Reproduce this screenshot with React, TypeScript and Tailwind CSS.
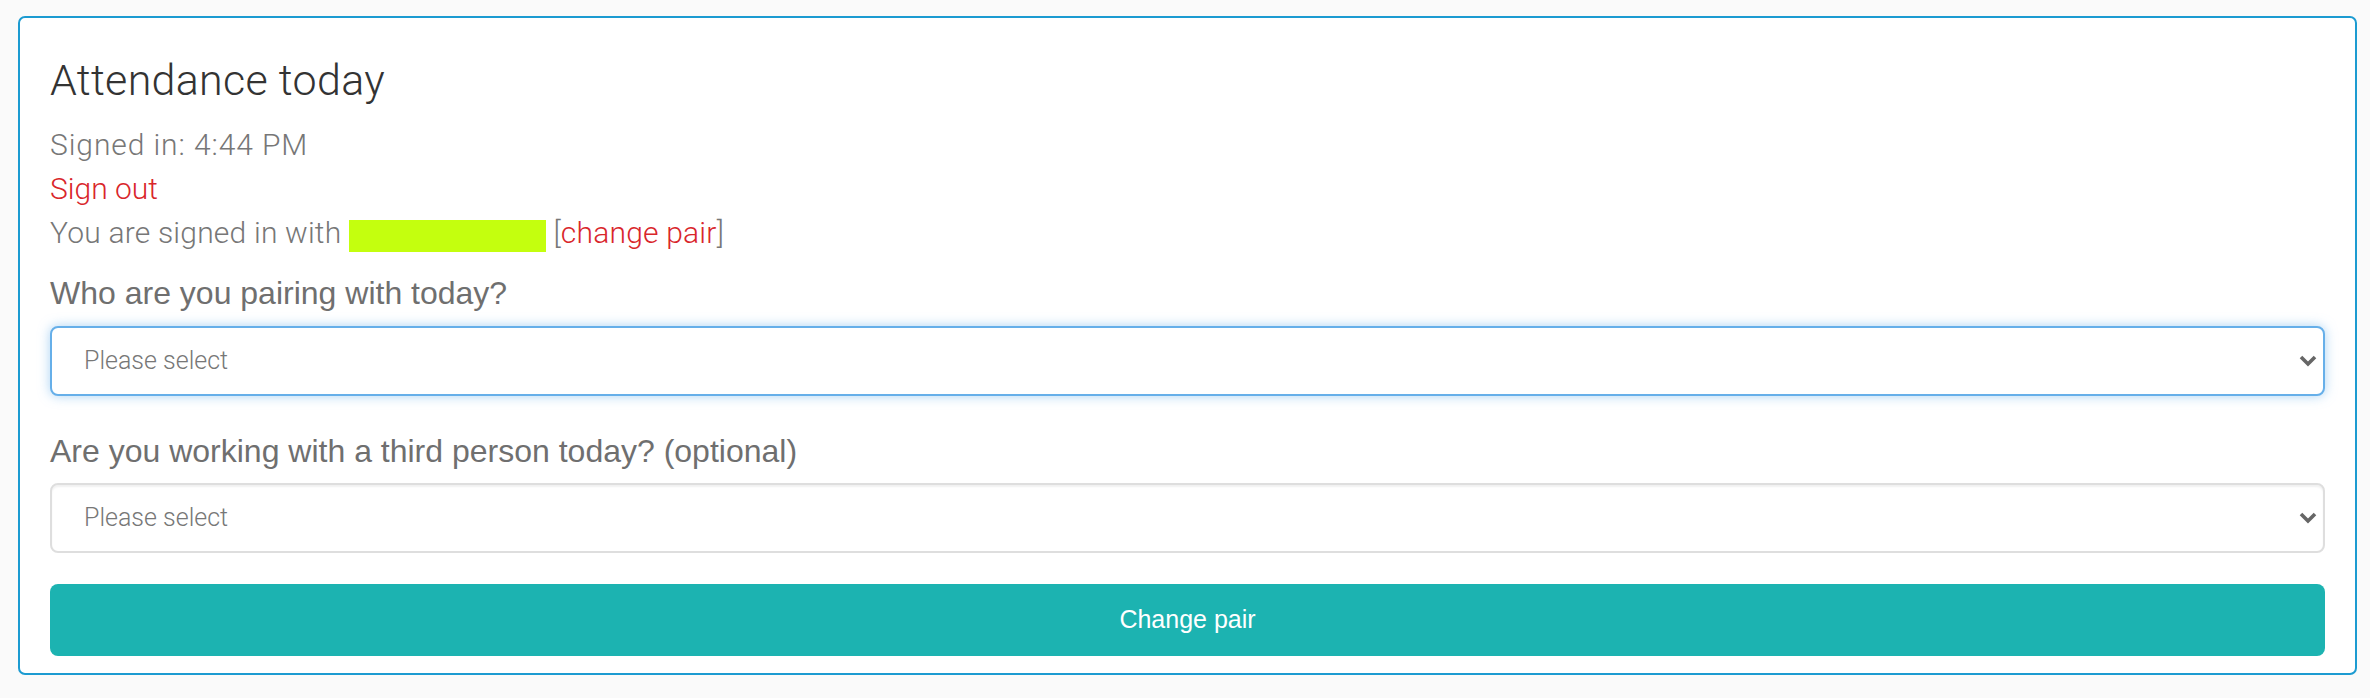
import React from 'react'

const LIGHT = "font-['Roboto','Liberation_Sans',sans-serif] font-light"
const REGULAR = "font-['Liberation_Sans','Roboto',sans-serif] font-normal"

function Chevron() {
  return (
    <svg width="18" height="12" viewBox="0 0 18 12" className="pointer-events-none absolute right-[8px] top-1/2 -translate-y-1/2">
      <polyline points="2,2 9,9 16,2" fill="none" stroke="#666" strokeWidth="3.6" strokeLinecap="butt" strokeLinejoin="miter" />
    </svg>
  )
}

function PairSelect({ focused }: { focused?: boolean }) {
  return (
    <div className="relative">
      <select
        defaultValue=""
        className={
          'block h-[70px] w-full appearance-none rounded-[8px] border-2 bg-white pl-[32px] pr-[40px] text-[25px] text-[#777] outline-none ' +
          LIGHT +
          (focused
            ? ' border-[#66afe9] shadow-[0_0_12px_rgba(102,175,233,0.55)]'
            : ' border-[#dedede] shadow-[inset_0_2px_2px_rgba(0,0,0,0.06)]')
        }
      >
        <option value="">Please select</option>
      </select>
      <Chevron />
    </div>
  )
}

export default function App() {
  return (
    <div className="min-h-[698px] bg-[#fafafa] pt-[16px]">
      <div className="ml-[18px] w-[2339px] rounded-[7px] border-2 border-[#1c9bd1] bg-white px-[30px] pt-[37px] pb-[17px]">
        {/* Header */}
        <h3 className={'mb-[18px] text-[43px] leading-[50px] tracking-[0.3px] text-[#333] ' + LIGHT}>Attendance today</h3>

        <div className={'text-[30px] leading-[44px] text-[#777] ' + LIGHT}>
          <p className="tracking-[0.9px]">Signed in: 4:44 PM</p>
          <p>
            <a href="#" className="text-[#d9262b]">Sign out</a>
          </p>
          <p className="tracking-[0.2px]">
            You are signed in with{' '}
            <span className="inline-block h-[32px] w-[197px] bg-[#c4ff0e] align-[-9px]" />{' '}
            [<a href="#" className="text-[#d9262b]">change pair</a>]
          </p>
        </div>

        {/* Pair selection */}
        <label className={'mt-[18px] mb-[13px] block text-[32px] leading-[40px] text-[#6f6f6f] ' + REGULAR}>
          Who are you pairing with today?
        </label>
        <PairSelect focused />

        <label className={'mt-[35px] mb-[12px] block text-[32px] leading-[40px] text-[#6f6f6f] ' + REGULAR}>
          Are you working with a third person today? (optional)
        </label>
        <PairSelect />

        <button className={'mt-[31px] flex h-[72px] w-full items-center justify-center rounded-[8px] bg-[#1cb3b1] text-[25px] text-white ' + REGULAR}>
          Change pair
        </button>
      </div>
    </div>
  )
}
